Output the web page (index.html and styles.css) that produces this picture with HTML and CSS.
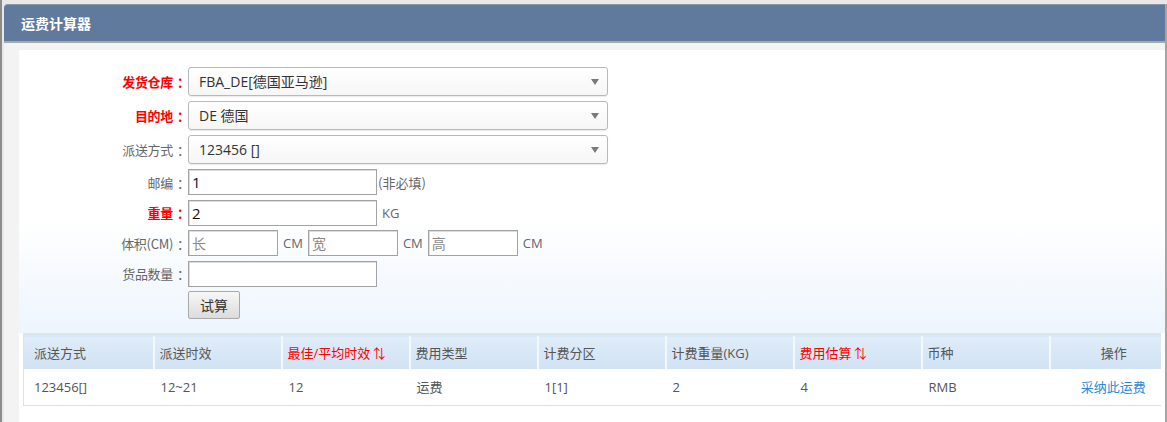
FILE: index.html
```html
<!DOCTYPE html>
<html lang="zh-CN">
<head>
  <meta charset="UTF-8">
  <title>运费计算器</title>
  <link rel="stylesheet" href="styles.css">
</head>
<body>
  <div class="wrap">
    <div class="panel">
      <div class="panel-head">运费计算器</div>
      <div class="panel-body">
        <div class="content">

          <!-- calculator form -->
          <form class="calc-form">
            <div class="row row-select">
              <label class="lbl req">发货仓库<span class="colon">：</span></label>
              <span class="sel"><select><option>FBA_DE[德国亚马逊]</option></select></span>
            </div>
            <div class="row row-select">
              <label class="lbl req">目的地<span class="colon">：</span></label>
              <span class="sel"><select><option>DE 德国</option></select></span>
            </div>
            <div class="row row-select">
              <label class="lbl">派送方式<span class="colon">：</span></label>
              <span class="sel"><select><option>123456 []</option></select></span>
            </div>
            <div class="row">
              <label class="lbl">邮编<span class="colon">：</span></label>
              <input type="text" class="txt" value="1">
              <span class="note">(非必填)</span>
            </div>
            <div class="row">
              <label class="lbl req">重量<span class="colon">：</span></label>
              <input type="text" class="txt" value="2">
              <span class="unit">KG</span>
            </div>
            <div class="row">
              <label class="lbl">体积(CM)<span class="colon">：</span></label>
              <input type="text" class="txt small" placeholder="长">
              <span class="unit">CM</span>
              <input type="text" class="txt small" placeholder="宽">
              <span class="unit">CM</span>
              <input type="text" class="txt small" placeholder="高">
              <span class="unit">CM</span>
            </div>
            <div class="row">
              <label class="lbl">货品数量<span class="colon">：</span></label>
              <input type="text" class="txt">
            </div>
            <div class="row row-btn">
              <span class="lbl"></span>
              <button type="button" class="btn">试算</button>
            </div>
          </form>

          <!-- result table -->
          <div class="result">
            <table class="grid">
              <thead>
                <tr>
                  <th class="c1">派送方式</th>
                  <th>派送时效</th>
                  <th class="hot">最佳/平均时效<span class="arr">↑↓</span></th>
                  <th>费用类型</th>
                  <th>计费分区</th>
                  <th>计费重量(KG)</th>
                  <th class="hot">费用估算<span class="arr">↑↓</span></th>
                  <th>币种</th>
                  <th class="op">操作</th>
                </tr>
              </thead>
              <tbody>
                <tr>
                  <td class="c1">123456[]</td>
                  <td>12~21</td>
                  <td>12</td>
                  <td>运费</td>
                  <td>1[1]</td>
                  <td>2</td>
                  <td>4</td>
                  <td>RMB</td>
                  <td class="op"><a href="#" class="link">采纳此运费</a></td>
                </tr>
              </tbody>
            </table>
          </div>

        </div>
      </div>
    </div>
  </div>
</body>
</html>
```

FILE: styles.css
```css
body {
  margin: 0;
  background-color: #e8e8e8;
  font-family: "Open Sans", "Noto Sans CJK SC", sans-serif;
  font-size: 13px;
  color: #555;
}

.wrap {
  border-left: 2px solid #8c8c8c;
  padding: 4px 0 0 2px;
  height: 418px;
  overflow: hidden;
}

.panel {
  border-right: 2px solid #a5a5a5;
  height: 100%;
  display: flex;
  flex-direction: column;
}

.panel-head {
  height: 36px;
  line-height: 36px;
  padding-left: 17px;
  background-color: #5f7a9c;
  border-top: 1px solid #8795a8;
  border-bottom: 2px solid #a8a8a8;
  border-radius: 4px 0 0 0;
  color: #fff;
  font-family: "Noto Sans CJK SC", sans-serif;
  font-weight: bold;
  font-size: 14px;
}

.panel-body {
  flex: 1;
  background-color: #f3f3f3;
  padding: 7px 0 0 15px;
  display: flex;
}

.content {
  flex: 1;
  background-color: #fff;
}

/* form */
.calc-form {
  padding: 17px 0 14px 0;
  background: linear-gradient(to bottom, #fff 0, #fff 170px, #edf5fd 283px);
  display: flex;
  flex-direction: column;
  gap: 4.5px;
}

.row {
  display: flex;
  align-items: center;
  height: 26px;
}

.row-select {
  height: 29px;
  margin-bottom: 0.5px;
}

.row-btn {
  height: 28px;
}

.lbl {
  width: 169px;
  flex: none;
  text-align: right;
  font-family: "Noto Sans CJK SC", sans-serif;
  font-size: 13px;
  color: #666;
  letter-spacing: -0.3px;
}

.lbl .colon {
  display: inline-block;
  width: 11px;
  padding-left: 4px;
  letter-spacing: 0;
  text-align: left;
}

.lbl.req {
  color: #f00;
  font-weight: bold;
}

.sel {
  position: relative;
  display: block;
  width: 420px;
  height: 29px;
}

.sel select {
  appearance: none;
  -webkit-appearance: none;
  width: 100%;
  height: 100%;
  margin: 0;
  padding: 0 0 0 10px;
  border: 1px solid #b9b9b9;
  border-radius: 3px;
  background: linear-gradient(to bottom, #fff 0, #f6f6f6 100%);
  box-shadow: 0 1px 1px rgba(0, 0, 0, 0.08);
  font-family: "Open Sans", "Noto Sans CJK SC", sans-serif;
  font-size: 14px;
  color: #333;
}

.sel::after {
  content: "";
  position: absolute;
  right: 9px;
  top: 12px;
  border-left: 4px solid transparent;
  border-right: 4px solid transparent;
  border-top: 6px solid #7a7a7a;
}

.txt {
  box-sizing: border-box;
  width: 189px;
  height: 26px;
  margin: 0;
  padding: 0 3px;
  border: 1px solid #a3a3a3;
  box-shadow: inset 1px 1px 0 #dcdcdc;
  font-family: "Open Sans", "Noto Sans CJK SC", sans-serif;
  font-size: 15px;
  color: #111;
  background: #fff;
}

.txt.small {
  width: 90px;
}

.txt::placeholder {
  color: #8a8a8a;
  font-family: "Noto Sans CJK SC", sans-serif;
  font-size: 14px;
}

.note {
  font-family: "Noto Sans CJK SC", sans-serif;
  font-size: 13px;
  color: #666;
  padding-left: 1px;
}

.unit {
  font-size: 13px;
  color: #666;
  padding: 0 5px 0 5px;
}

.btn {
  width: 52px;
  height: 28px;
  margin: 0;
  padding: 0;
  border: 1px solid #a9a9a9;
  border-radius: 2px;
  background: linear-gradient(to bottom, #f7f7f7 0, #dcdcdc 100%);
  font-family: "Noto Sans CJK SC", sans-serif;
  font-size: 14px;
  color: #333;
}

/* result table */
.result {
  background-color: #fff;
  padding: 0 4px 0 4px;
}

.grid {
  width: 1138px;
  border-collapse: collapse;
  table-layout: fixed;
  border-left: 1px solid #d3e4f4;
  border-bottom: 1px solid #cfe2f4;
  border-top: 3px solid #dbe6f1;
}

.grid th {
  height: 34px;
  padding: 0 0 0 5px;
  text-align: left;
  font-weight: normal;
  background: linear-gradient(to bottom, #dfecf9 0, #d1e2f3 100%);
  border-left: 2px solid #f3f8fd;
  color: #555;
  width: 128px;
  box-sizing: border-box;
}

.grid th.c1 {
  width: 130px;
  border-left: none;
  padding-left: 10px;
}

.grid th.op {
  width: auto;
  text-align: center;
  padding-left: 16px;
}

.grid th.hot {
  color: #f00;
}

.arr {
  font-family: "Noto Sans CJK SC", sans-serif;
  letter-spacing: -8px;
}

.grid td {
  height: 36px;
  padding: 0 0 0 7px;
  color: #555;
  font-size: 13px;
}

.grid td.c1 {
  padding-left: 10px;
}

.grid td.op {
  text-align: center;
  padding-left: 16px;
}

.link {
  color: #2a8ad6;
  text-decoration: none;
}
```
